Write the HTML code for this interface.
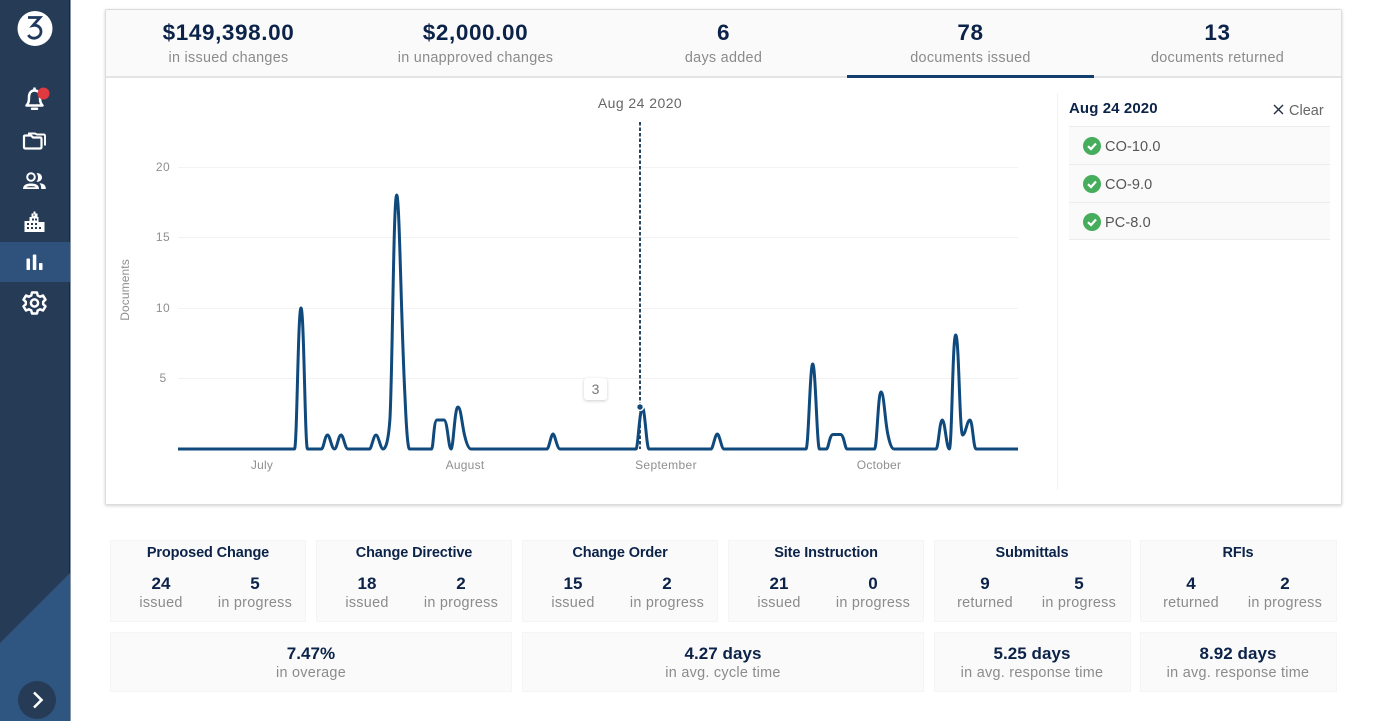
<!DOCTYPE html>
<html><head><meta charset="utf-8"><style>
html,body{margin:0;padding:0;background:#fff}
body{width:1400px;height:721px;position:relative;overflow:hidden;font-family:"Liberation Sans",sans-serif}
.a{position:absolute}
.c{position:absolute;text-align:center;white-space:nowrap}
.n{color:#0c2349;font-weight:700;font-size:17px;letter-spacing:.05px}
.l{color:#8b8b8b;font-size:14.4px;letter-spacing:.28px}
.t{color:#0c2349;font-weight:700;font-size:14.5px;letter-spacing:-.12px}
.b{position:absolute;background:#fafafa;border:1px solid #f5f5f5;box-sizing:border-box}
.h{font-size:22.5px;letter-spacing:.6px;color:#0c2349;font-weight:700}
.ax{color:#8f8f8f;font-size:12px;letter-spacing:.4px}
.r{position:absolute;left:1069px;width:261px;background:#fafafa;border-bottom:1px solid #ececec}
.r span{position:absolute;left:36px;top:12px;font-size:14.5px;color:#555;letter-spacing:.1px}
.r svg{position:absolute;left:14px;top:10px}
</style></head><body>
<svg class="a" style="left:0;top:0" width="71" height="721" viewBox="0 0 71 721">
<rect width="70" height="721" fill="#253b56"/><rect x="69" width="1.5" height="721" fill="#10294f"/>
<rect y="242" width="70" height="40" fill="#2f527c"/>
<path d="M70 573V721H0V643Z" fill="#2f5680"/>
<circle cx="35" cy="28.500" r="17.500" fill="#fff"/>
<path d="M28 17.500H40L33 25.500C37.500 24.500 41 27.500 41 31.500C41 35.500 37.500 38.200 34 38.200C31.500 38.200 29.500 37 28.300 35" fill="none" stroke="#1f3a5e" stroke-width="2.800"/>
<g fill="none" stroke="#fff" stroke-width="2.500">
<path d="M26.500 105.500C29 103 29 100 29 97C29 93 31 90.500 34.500 90.500C38 90.500 40 93 40 97C40 100 40 103 42.500 105.500Z" stroke-linejoin="round"/>
<path d="M32 108.800H37" stroke-linecap="round"/>
<path d="M34.500 87.500V90"/>
<path d="M24 136.500V147C24 148 24.500 148.500 25.500 148.500H40C41 148.500 41.500 148 41.500 147V139C41.500 138 41 137.500 40 137.500H33L31 135.500H25.500C24.500 135.500 24 136 24 136.500Z" stroke-linejoin="round" stroke-width="2.200"/>
<path d="M28 133.500H35L37 134.500H43.500C44.500 134.500 45 135 45 136V145.500" stroke-width="1.900"/>
</g>
<circle cx="43.500" cy="93.500" r="6" fill="#e0393f"/>
<g fill="#fff">
<circle cx="31" cy="177" r="3.800" fill="none" stroke="#fff" stroke-width="2"/>
<path d="M23 189C23 184.500 27 183.500 31 183.500C35 183.500 39 184.500 39 189Z"/>
<path d="M36.500 173.200C39.800 172.700 42 175 42 177.500C42 180 39.800 182 36.500 181.800C38.500 179.500 38.500 175.500 36.500 173.200Z"/>
<path d="M39.500 183.300C43.500 183.500 45.800 185 45.800 189H41.200C41.200 186.500 40.800 184.800 39.500 183.300Z"/>
<path d="M24.500 232V221H29.500V217H31.500V213.500H33.500V211.500H35.500V213.500H37.500V217H38.500V222H44.500V232Z"/>
</g>
<path d="M26.500 187.200C27.500 185.800 34.500 185.800 35.700 187.200Z" fill="#253b56"/>
<g fill="#253b56">
<rect x="27" y="223" width="2" height="2"/><rect x="31" y="223" width="2" height="2"/><rect x="35" y="223" width="2" height="2"/>
<rect x="27" y="227" width="2" height="2"/><rect x="31" y="227" width="2" height="2"/><rect x="35" y="227" width="2" height="2"/><rect x="39" y="227" width="2" height="2"/>
<rect x="32" y="218.500" width="2" height="2"/><rect x="35" y="218.500" width="2" height="2"/>
<circle cx="34" cy="215" r=".8"/>
</g>
<g fill="#fff"><rect x="26.500" y="258.500" width="3.500" height="11.500" rx=".8"/><rect x="32.800" y="254.500" width="3.500" height="15.500" rx=".8"/><rect x="39" y="263" width="3.500" height="7" rx=".8"/></g>
<g fill="none" stroke="#fff" stroke-width="2.500" stroke-linejoin="round">
<path d="M32 292.500H37L37.700 295.500L40 296.700L43 295.500L45.500 299.700L43.200 301.700V304.300L45.500 306.300L43 310.500L40 309.300L37.700 310.500L37 313.500H32L31.300 310.500L29 309.300L26 310.500L23.500 306.300L25.800 304.300V301.700L23.500 299.700L26 295.500L29 296.700L31.300 295.500Z"/>
<circle cx="34.500" cy="303" r="3.600"/>
</g>
<circle cx="37" cy="700" r="19" fill="#253b56"/>
<path d="M34 692.500L41.500 700L34 707.500" fill="none" stroke="#fff" stroke-width="2.600"/>
</svg>

<div class="a" style="left:105px;top:9px;width:1237px;height:496px;box-sizing:border-box;background:#fff;border:1px solid #dcdcdc;border-radius:2px;box-shadow:0 1px 3px rgba(0,0,0,.18)"></div>
<div class="a" style="left:106px;top:10px;width:1235px;height:66px;background:#fafafa;border-bottom:2px solid #e4e4e4"></div>
<div class="a" style="left:847px;top:75px;width:247px;height:3px;background:#123f6d"></div>

<div class="c h" style="left:105px;width:247px;top:20px">$149,398.00</div><div class="c l" style="left:105px;width:247px;top:50px">in issued changes</div>
<div class="c h" style="left:352px;width:247px;top:20px">$2,000.00</div><div class="c l" style="left:352px;width:247px;top:50px">in unapproved changes</div>
<div class="c h" style="left:600px;width:247px;top:20px">6</div><div class="c l" style="left:600px;width:247px;top:50px">days added</div>
<div class="c h" style="left:847px;width:247px;top:20px">78</div><div class="c l" style="left:847px;width:247px;top:50px">documents issued</div>
<div class="c h" style="left:1094px;width:247px;top:20px">13</div><div class="c l" style="left:1094px;width:247px;top:50px">documents returned</div>

<svg class="a" style="left:0;top:0" width="1400" height="721" viewBox="0 0 1400 721">
<g stroke="#f3f3f3" stroke-width="1"><path d="M178 167.500H1018M178 237.500H1018M178 308.500H1018M178 378.500H1018"/></g>
<path d="M1057.500 93V490" stroke="#f2f2f2"/>
<path d="M640 122V449" stroke="#123456" stroke-width="1.800" stroke-dasharray="3.500 2"/>
<path fill="none" stroke="#104a7d" stroke-width="3" stroke-linejoin="round" d="M178 449H294.500C297 449 298 308 301 308C304 308 305 449 307.500 449H321.500C323.500 449 325 435 327.500 435C330 435 331.500 449 334.500 449C337 449 338.500 435 341 435C343.500 435 345 449 348 449H369.500C371.500 449 373.500 435 376 435C378.500 435 380.500 449 383 449C386 449 388.500 440 390 418C392.500 370 393.500 195 396.700 195C399.500 195 401 320 405 397C406 420 407.500 449 409.500 449H431.500C433.500 449 433.500 420 437 420H444C447.500 420 448.500 449 451 449C453.500 449 454.500 407 458 407C461 407 462 426 465 437C466.500 443 468.500 449 471 449H547C549 449 551 434 553 434C555 434 557 449 560 449H636C638 449 639.500 408 642.500 408C645 408 646.500 449 649 449H711C713 449 715 434 717.300 434C719.500 434 721.500 449 724 449H806C808.500 449 810 364 812.700 364C815.500 364 817 449 819.500 449H826.500C828.500 449 829.500 434.500 833 434.500H840.500C844 434.500 845 449 847 449H874.500C877 449 878 392 881 392C884 392 885 422 888 435C889.500 442 891.500 449 894 449H936C938.500 449 939.500 420 942.300 420C945 420 946.500 449 949.300 449C952 449 952.500 335 955.700 335C959 335 959.500 435 962.700 435C965.500 435 967 420 970 420C972.500 420 973.500 449 976 449H1018"/>
<circle cx="640" cy="407" r="4.200" fill="#fff"/><circle cx="640" cy="407" r="2.700" fill="#104a7d"/>
</svg>

<div class="c ax" style="left:143px;width:40px;top:160px">20</div>
<div class="c ax" style="left:143px;width:40px;top:230px">15</div>
<div class="c ax" style="left:143px;width:40px;top:301px">10</div>
<div class="c ax" style="left:143px;width:40px;top:371px">5</div>
<div class="c ax" style="left:85px;width:80px;top:283px;transform:rotate(-90deg);letter-spacing:.1px">Documents</div>
<div class="c ax" style="left:222px;width:80px;top:458px;letter-spacing:.25px">July</div>
<div class="c ax" style="left:425px;width:80px;top:458px;letter-spacing:.25px">August</div>
<div class="c ax" style="left:626px;width:80px;top:458px;letter-spacing:.35px">September</div>
<div class="c ax" style="left:839px;width:80px;top:458px;letter-spacing:.25px">October</div>
<div class="c" style="left:580px;width:120px;top:95px;font-size:14px;color:#666;letter-spacing:.45px">Aug 24 2020</div>
<div class="c" style="left:584px;top:378px;width:23px;height:22px;background:#fff;border-radius:3px;box-shadow:0 1px 3px rgba(0,0,0,.2);font-size:14px;line-height:22px;color:#777">3</div>

<div class="a t" style="left:1069px;top:100px;white-space:nowrap;font-size:15px;letter-spacing:.1px">Aug 24 2020</div>
<svg class="a" style="left:1273px;top:104px" width="11" height="11"><path d="M1 1L10 10M10 1L1 10" stroke="#222f45" stroke-width="1.400"/></svg>
<div class="a" style="left:1289px;top:103px;font-size:14.5px;color:#666;letter-spacing:0">Clear</div>
<div class="a" style="left:1069px;top:126px;width:261px;height:1px;background:#ececec"></div>
<div class="r" style="top:127px;height:37px"><svg width="18" height="18"><circle cx="9" cy="9" r="9" fill="#46ad5c"/><path d="M5 9.200L8 12L13 6.500" fill="none" stroke="#fff" stroke-width="2.200"/></svg><span>CO-10.0</span></div>
<div class="r" style="top:165px;height:37px"><svg width="18" height="18"><circle cx="9" cy="9" r="9" fill="#46ad5c"/><path d="M5 9.200L8 12L13 6.500" fill="none" stroke="#fff" stroke-width="2.200"/></svg><span>CO-9.0</span></div>
<div class="r" style="top:203px;height:36px"><svg width="18" height="18"><circle cx="9" cy="9" r="9" fill="#46ad5c"/><path d="M5 9.200L8 12L13 6.500" fill="none" stroke="#fff" stroke-width="2.200"/></svg><span>PC-8.0</span></div>

<div class="b" style="left:110px;top:540px;width:196px;height:82px"></div>
<div class="b" style="left:316px;top:540px;width:196px;height:82px"></div>
<div class="b" style="left:522px;top:540px;width:196px;height:82px"></div>
<div class="b" style="left:728px;top:540px;width:196px;height:82px"></div>
<div class="b" style="left:934px;top:540px;width:197px;height:82px"></div>
<div class="b" style="left:1140px;top:540px;width:197px;height:82px"></div>
<div class="b" style="left:110px;top:632px;width:402px;height:60px"></div>
<div class="b" style="left:522px;top:632px;width:402px;height:60px"></div>
<div class="b" style="left:934px;top:632px;width:197px;height:60px"></div>
<div class="b" style="left:1140px;top:632px;width:197px;height:60px"></div>

<div class="c t" style="left:110px;width:196px;top:545px">Proposed Change</div>
<div class="c n" style="left:111px;width:100px;top:574px">24</div><div class="c l" style="left:111px;width:100px;top:595px">issued</div>
<div class="c n" style="left:205px;width:100px;top:574px">5</div><div class="c l" style="left:205px;width:100px;top:595px">in progress</div>

<div class="c t" style="left:316px;width:196px;top:545px">Change Directive</div>
<div class="c n" style="left:317px;width:100px;top:574px">18</div><div class="c l" style="left:317px;width:100px;top:595px">issued</div>
<div class="c n" style="left:411px;width:100px;top:574px">2</div><div class="c l" style="left:411px;width:100px;top:595px">in progress</div>

<div class="c t" style="left:522px;width:196px;top:545px">Change Order</div>
<div class="c n" style="left:523px;width:100px;top:574px">15</div><div class="c l" style="left:523px;width:100px;top:595px">issued</div>
<div class="c n" style="left:617px;width:100px;top:574px">2</div><div class="c l" style="left:617px;width:100px;top:595px">in progress</div>

<div class="c t" style="left:728px;width:196px;top:545px">Site Instruction</div>
<div class="c n" style="left:729px;width:100px;top:574px">21</div><div class="c l" style="left:729px;width:100px;top:595px">issued</div>
<div class="c n" style="left:823px;width:100px;top:574px">0</div><div class="c l" style="left:823px;width:100px;top:595px">in progress</div>

<div class="c t" style="left:934px;width:196px;top:545px">Submittals</div>
<div class="c n" style="left:935px;width:100px;top:574px">9</div><div class="c l" style="left:935px;width:100px;top:595px">returned</div>
<div class="c n" style="left:1029px;width:100px;top:574px">5</div><div class="c l" style="left:1029px;width:100px;top:595px">in progress</div>

<div class="c t" style="left:1140px;width:196px;top:545px">RFIs</div>
<div class="c n" style="left:1141px;width:100px;top:574px">4</div><div class="c l" style="left:1141px;width:100px;top:595px">returned</div>
<div class="c n" style="left:1235px;width:100px;top:574px">2</div><div class="c l" style="left:1235px;width:100px;top:595px">in progress</div>

<div class="c n" style="left:110px;width:402px;top:644px">7.47%</div><div class="c l" style="left:110px;width:402px;top:665px">in overage</div>
<div class="c n" style="left:522px;width:402px;top:644px">4.27 days</div><div class="c l" style="left:522px;width:402px;top:665px">in avg. cycle time</div>
<div class="c n" style="left:934px;width:196px;top:644px">5.25 days</div><div class="c l" style="left:934px;width:196px;top:665px">in avg. response time</div>
<div class="c n" style="left:1140px;width:196px;top:644px">8.92 days</div><div class="c l" style="left:1140px;width:196px;top:665px">in avg. response time</div>
</body></html>
